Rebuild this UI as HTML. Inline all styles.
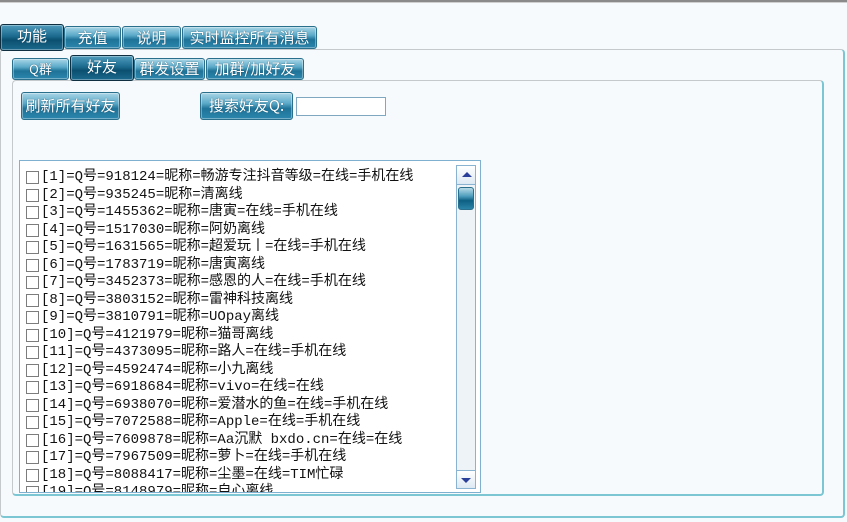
<!DOCTYPE html>
<html><head><meta charset="utf-8"><style>
*{box-sizing:border-box;margin:0;padding:0}
body{width:847px;height:522px;background:#f6fafc;position:relative;overflow:hidden;font-family:"Liberation Mono","Noto Sans CJK SC",monospace;}
.topline{position:absolute;left:0;top:0;width:847px;height:3px;background:#8a8a8a;border-bottom:1px solid #cfcfcf}
.b{position:absolute;border:1px solid #2a6f8c;border-radius:3px;background:linear-gradient(#a9d6e6 0%,#5aa9c8 40%,#1f7398 60%,#2b86ad 100%);color:#fff;font-size:15px;text-align:center;line-height:22px;text-shadow:0 0 1px #0a3a52;font-family:"Noto Sans CJK SC",sans-serif;box-shadow:inset 0 0 0 1px rgba(255,255,255,.35)}
.sel{background:linear-gradient(#4f9cbd 0%,#1c6b8f 45%,#0b4f70 60%,#1b6a8e 100%);border:1px solid #0f2f40}
.panel{position:absolute;background:#f6fafc;border:1px solid #c5c9cb;border-right:2px solid #7cc6d4;border-bottom:2px solid #7cc6d4;border-radius:4px}
.list{position:absolute;left:19px;top:160px;width:462px;height:333px;background:#fff;border:1px solid #7fb0cf;overflow:hidden}
.row{height:17.5px;font-size:14px;line-height:17.5px;color:#111;white-space:nowrap;padding-left:6px;display:flex;align-items:center}
.cb{width:13px;height:13px;border:1px solid #7c7c7c;margin-right:2px;flex:none;background:#fff}
.sb{position:absolute;left:456px;top:165px;width:20px;height:324px;background:#eef3f8;border:1px solid #8ab3d2}
</style></head><body>
<div class="topline"></div>
<div class="panel" style="left:0;top:49px;width:845px;height:469px"></div>
<div class="b" style="left:122px;top:26px;width:59px;height:23px">说明</div>
<div class="b" style="left:182px;top:26px;width:135px;height:23px">实时监控所有消息</div>
<div class="b" style="left:64px;top:26px;width:57px;height:23px">充值</div>
<div class="b sel" style="left:0;top:24px;width:64px;height:27px">功能</div>
<div class="panel" style="left:12px;top:80px;width:812px;height:416px"></div>
<div class="b" style="left:12px;top:58px;width:57px;height:22px;font-size:13px;line-height:20px">Q群</div>
<div class="b" style="left:134px;top:58px;width:71px;height:22px;line-height:20px">群发设置</div>
<div class="b" style="left:206px;top:58px;width:98px;height:22px;line-height:20px">加群/加好友</div>
<div class="b sel" style="left:70px;top:55px;width:64px;height:26px">好友</div>
<div class="b" style="left:21px;top:92px;width:99px;height:28px;line-height:26px">刷新所有好友</div>
<div class="b" style="left:200px;top:92px;width:93px;height:28px;line-height:26px">搜索好友Q:</div>
<div style="position:absolute;left:296px;top:97px;width:90px;height:19px;background:#fff;border:1px solid #7fa8c0"></div>
<div class="list"><div style="padding-top:8px">
<div class="row"><span class="cb"></span>[1]=Q号=918124=昵称=畅游专注抖音等级=在线=手机在线</div>
<div class="row"><span class="cb"></span>[2]=Q号=935245=昵称=清离线</div>
<div class="row"><span class="cb"></span>[3]=Q号=1455362=昵称=唐寅=在线=手机在线</div>
<div class="row"><span class="cb"></span>[4]=Q号=1517030=昵称=阿奶离线</div>
<div class="row"><span class="cb"></span>[5]=Q号=1631565=昵称=超爱玩丨=在线=手机在线</div>
<div class="row"><span class="cb"></span>[6]=Q号=1783719=昵称=唐寅离线</div>
<div class="row"><span class="cb"></span>[7]=Q号=3452373=昵称=感恩的人=在线=手机在线</div>
<div class="row"><span class="cb"></span>[8]=Q号=3803152=昵称=雷神科技离线</div>
<div class="row"><span class="cb"></span>[9]=Q号=3810791=昵称=UOpay离线</div>
<div class="row"><span class="cb"></span>[10]=Q号=4121979=昵称=猫哥离线</div>
<div class="row"><span class="cb"></span>[11]=Q号=4373095=昵称=路人=在线=手机在线</div>
<div class="row"><span class="cb"></span>[12]=Q号=4592474=昵称=小九离线</div>
<div class="row"><span class="cb"></span>[13]=Q号=6918684=昵称=vivo=在线=在线</div>
<div class="row"><span class="cb"></span>[14]=Q号=6938070=昵称=爱潜水的鱼=在线=手机在线</div>
<div class="row"><span class="cb"></span>[15]=Q号=7072588=昵称=Apple=在线=手机在线</div>
<div class="row"><span class="cb"></span>[16]=Q号=7609878=昵称=Aa沉默 bxdo.cn=在线=在线</div>
<div class="row"><span class="cb"></span>[17]=Q号=7967509=昵称=萝卜=在线=手机在线</div>
<div class="row"><span class="cb"></span>[18]=Q号=8088417=昵称=尘墨=在线=TIM忙碌</div>
<div class="row"><span class="cb"></span>[19]=Q号=8148979=昵称=自心离线</div>
</div></div>
<div class="sb">
<div style="height:19px;background:linear-gradient(#fff,#dde9f3);border-bottom:1px solid #8ab3d2;position:relative"><div style="position:absolute;left:5px;top:6px;border-left:5px solid transparent;border-right:5px solid transparent;border-bottom:5px solid #2a3f9a"></div></div>
<div style="margin:2px 1px;height:23px;border-radius:3px;background:linear-gradient(#b8dbe8,#4a9bbb 40%,#0d5f82 60%,#2a84a8);border:1px solid #2a6f8c"></div>
<div style="position:absolute;bottom:0;left:0;width:18px;height:18px;background:linear-gradient(#fff,#dde9f3);border-top:1px solid #8ab3d2"><div style="position:absolute;left:4px;top:7px;border-left:5px solid transparent;border-right:5px solid transparent;border-top:5px solid #2a3f9a"></div></div>
</div>
</body></html>
